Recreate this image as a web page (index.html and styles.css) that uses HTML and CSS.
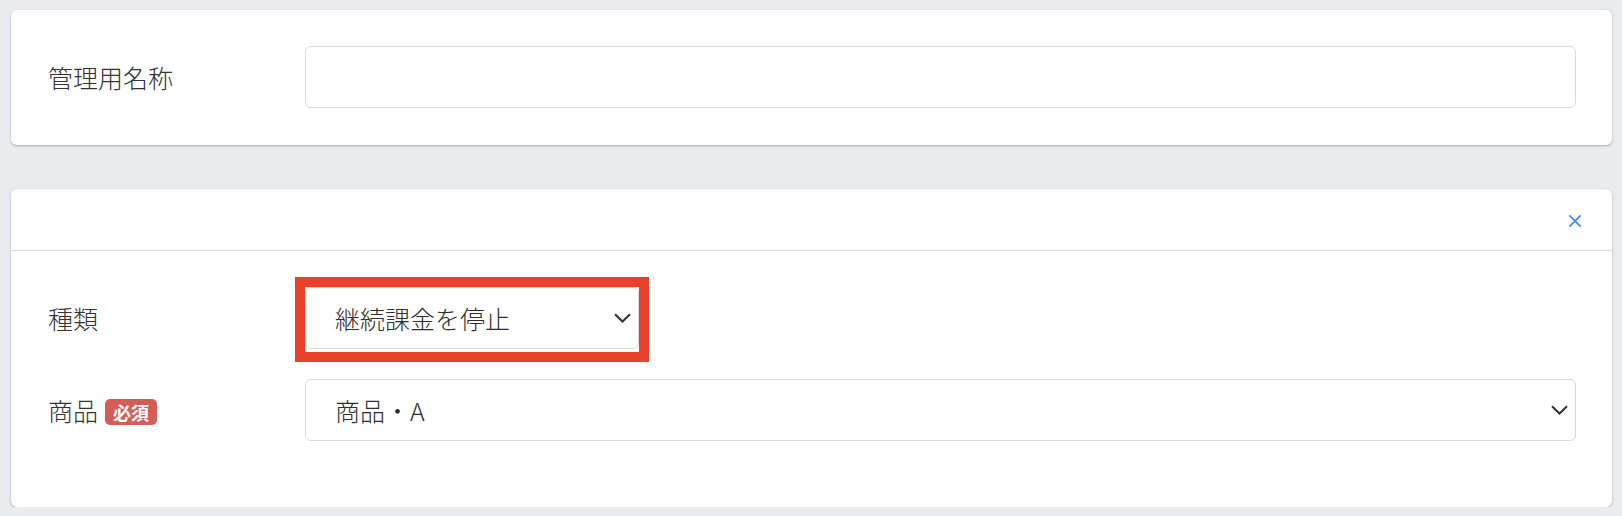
FILE: index.html
```html
<!DOCTYPE html>
<html lang="ja">
<head>
<meta charset="utf-8">
<title>設定</title>
<link rel="stylesheet" href="styles.css">
</head>
<body>
  <div class="page">
    <section class="card card-basic">
      <div class="form-row">
        <div class="label">管理用名称</div>
        <div class="field">
          <div class="input"></div>
        </div>
      </div>
    </section>

    <section class="card card-action">
      <div class="card-header">
        <button class="close" aria-label="閉じる">
          <svg width="12" height="12" viewBox="0 0 12 12"><path d="M1 1 L11 11 M11 1 L1 11" stroke="#4a8ff0" stroke-width="1.8" fill="none" stroke-linecap="square"/></svg>
        </button>
      </div>
      <div class="card-body">
        <div class="form-row">
          <div class="label">種類</div>
          <div class="field">
            <div class="select select-short highlighted">
              <span class="select-value">継続課金を停止</span>
              <svg class="chevron" width="17" height="10" viewBox="0 0 17 10"><path d="M1 1.2 L8.5 8.5 L16 1.2" stroke="#333" stroke-width="2" fill="none"/></svg>
            </div>
          </div>
        </div>
        <div class="form-row">
          <div class="label">商品<span class="badge">必須</span></div>
          <div class="field">
            <div class="select">
              <span class="select-value">商品・A</span>
              <svg class="chevron" width="17" height="10" viewBox="0 0 17 10"><path d="M1 1.2 L8.5 8.5 L16 1.2" stroke="#333" stroke-width="2" fill="none"/></svg>
            </div>
          </div>
        </div>
      </div>
    </section>
  </div>
</body>
</html>
```

FILE: styles.css
```css
* {
  box-sizing: border-box;
}

html, body {
  margin: 0;
  padding: 0;
  background: #ebecef;
  font-family: "Noto Sans CJK JP", "Noto Sans", sans-serif;
  color: #3a3a3a;
}

.page {
  padding: 10px 10px 0 11px;
  display: flex;
  flex-direction: column;
  gap: 44px;
}

.card {
  background: #fff;
  border-radius: 6px;
  box-shadow: 0 1px 2px rgba(40, 50, 70, 0.28), 0 1px 4px rgba(40, 50, 70, 0.08);
}

.card-basic {
  padding: 36px 36px 37px 36px;
}

.form-row {
  display: grid;
  grid-template-columns: 258px 1fr;
  align-items: center;
}

.label {
  font-size: 25px;
  font-weight: 300;
  line-height: 30px;
  color: #333;
  display: flex;
  align-items: center;
  padding-left: 1px;
}

.input {
  height: 62px;
  border: 1px solid #dadada;
  border-radius: 6px;
  background: #fff;
}

.card-header {
  height: 62px;
  border-bottom: 1px solid #dcdde0;
  display: flex;
  justify-content: flex-end;
  align-items: center;
  padding-right: 31px;
}

.close {
  border: 0;
  background: none;
  padding: 0;
  width: 12px;
  height: 12px;
  display: block;
  cursor: pointer;
  margin-top: 2px;
}

.close svg {
  display: block;
}

.card-body {
  padding: 36px 36px 36px 36px;
  display: flex;
  flex-direction: column;
  gap: 30px;
}

.card-body .form-row:last-child {
  margin-bottom: 30px;
}

.select {
  position: relative;
  height: 62px;
  border: 1px solid #dadada;
  border-radius: 6px;
  background: #fff;
  display: flex;
  align-items: center;
  padding-left: 29px;
  padding-right: 7px;
}

.select-short {
  width: 334px;
}

.select-value {
  flex: 1;
  font-size: 25px;
  font-weight: 300;
  line-height: 30px;
  color: #2e2e2e;
}

.chevron {
  display: block;
  flex: none;
}

.highlighted::after {
  content: "";
  position: absolute;
  top: -11px;
  left: -11px;
  right: -11px;
  bottom: -14px;
  border: 10px solid #e8422a;
  pointer-events: none;
}

.badge {
  display: inline-block;
  margin-left: 7px;
  margin-top: 4px;
  height: 26px;
  line-height: 26px;
  padding: 0 8px;
  border-radius: 5px;
  background: #d65c57;
  color: #fff;
  font-size: 18px;
  font-weight: 700;
}
```
